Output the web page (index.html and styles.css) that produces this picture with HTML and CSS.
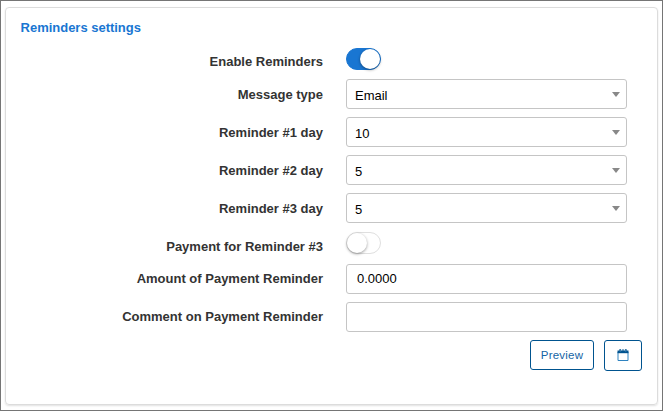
FILE: index.html
```html
<!DOCTYPE html>
<html lang="en">
<head>
<meta charset="utf-8">
<title>Reminders settings</title>
<link rel="stylesheet" href="styles.css">
</head>
<body>
<main class="card">
  <h1 class="title">Reminders settings</h1>
  <div class="row row-enable"><span class="label">Enable Reminders</span><span class="toggle on"></span></div>
  <div class="row row-select"><span class="label">Message type</span><div class="field select">Email</div></div>
  <div class="row row-select"><span class="label">Reminder #1 day</span><div class="field select">10</div></div>
  <div class="row row-select"><span class="label">Reminder #2 day</span><div class="field select">5</div></div>
  <div class="row row-select row-last-day"><span class="label">Reminder #3 day</span><div class="field select">5</div></div>
  <div class="row row-payment"><span class="label">Payment for Reminder #3</span><span class="toggle"></span></div>
  <div class="row"><span class="label">Amount of Payment Reminder</span><div class="field input">0.0000</div></div>
  <div class="row"><span class="label">Comment on Payment Reminder</span><div class="field input"></div></div>
  <div class="actions">
    <button class="btn preview">Preview</button>
    <button class="btn calendar" aria-label="Calendar">
      <svg width="12" height="13" viewBox="0 0 12 13"><path d="M1 3V11.5H11V3" fill="none" stroke="#2f83c0"/><path d="M.5 1.5h11v2.7H.5z" fill="#00538f"/><path d="M3.2 .3v2M6 .6v1M8.8 .3v2" stroke="#00538f" stroke-width="1.8"/><path d="M3.2 1.2v1.3M8.8 1.2v1.3" stroke="#8fbfe0" stroke-width=".7"/></svg>
    </button>
  </div>
</main>
</body>
</html>
```
FILE: styles.css
```css
* { box-sizing: border-box; }
body {
  margin: 0;
  height: 411px;
  padding: 6px 4px;
  border: 1px solid #757575;
  background: #fff;
  font: 13px/30px "Liberation Sans", Arial, sans-serif;
  overflow: hidden;
}
.card {
  width: 653px;
  height: 398px;
  padding: 8px 15px 0 15px;
  border: 1px solid #dcdcdc;
  border-radius: 4px;
  box-shadow: 0 1px 2px rgba(0, 0, 0, .12);
}
.title {
  margin: 0 0 8px -0.4px;
  color: #1976d2;
  font-size: 13px;
  letter-spacing: -0.02px;
  line-height: 24px;
}
.row {
  display: grid;
  grid-template-columns: 302px 281px;
  column-gap: 23px;
  height: 38px;
  align-items: start;
}
.row-enable { height: 31px; }
.row-enable .label { line-height: 27px; }
.row-select .label { line-height: 32px; }
.row-last-day { height: 39px; }
.row-payment { height: 32px; }
.row-payment .label { line-height: 30px; }
.label {
  color: #333;
  font-weight: bold;
  text-align: right;
  white-space: nowrap;
}
.field {
  height: 30px;
  border: 1px solid #c5c5c5;
  border-radius: 3px;
  color: #000;
  line-height: 28px;
}
.select {
  display: flex;
  align-items: center;
  justify-content: space-between;
  padding: 4px 6px 0 8px;
}
.select::after {
  content: "";
  margin-top: -3px;
  border: 4px solid transparent;
  border-top: 5px solid #888;
  border-bottom: 0;
}
.input { padding-left: 10px; }
.toggle {
  display: flex;
  width: 35px;
  height: 22px;
  border: 1px solid #dfdfdf;
  border-radius: 11px;
  background: #fff;
}
.toggle::before {
  content: "";
  width: 20px;
  height: 20px;
  border-radius: 50%;
  background: #fff;
  box-shadow: 0 1px 3px rgba(0, 0, 0, .4);
}
.toggle.on {
  justify-content: flex-end;
  border-color: #1976d2;
  background: #1976d2;
}
.actions {
  display: flex;
  justify-content: flex-end;
  align-items: flex-start;
  gap: 10px;
}
.btn {
  height: 30px;
  padding: 0;
  border: 1px solid #00538f;
  border-radius: 3px;
  background: #fff;
  color: #1565a5;
  font: 11.5px "Liberation Sans", Arial, sans-serif;
  letter-spacing: 0.2px;
}
.preview { width: 64px; }
.calendar {
  display: flex;
  align-items: center;
  justify-content: center;
  width: 38px;
  height: 31px;
  padding-bottom: 1px;
}
```
